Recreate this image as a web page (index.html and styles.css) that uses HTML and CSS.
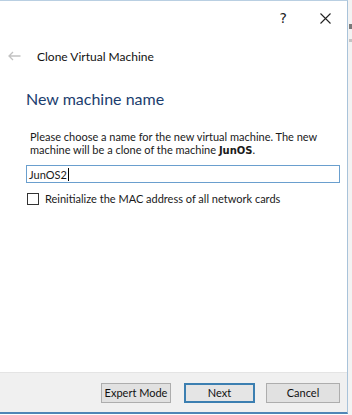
FILE: index.html
```html
<!DOCTYPE html>
<html>
<head>
<meta charset="utf-8">
<link rel="stylesheet" href="styles.css">
</head>
<body>
<div class="screen">
  <div class="dialog">
    <div class="titlebar">
      <span class="tb-help">?</span>
      <span class="tb-close">
        <svg width="11" height="11" viewBox="0 0 11 11"><path d="M0.5 0.5L10.5 10.5M10.5 0.5L0.5 10.5" stroke="#222" stroke-width="1.1" fill="none"/></svg>
      </span>
    </div>
    <div class="navrow">
      <svg class="back" width="13" height="10" viewBox="0 0 13 10"><path d="M5 1L1 5L5 9M1 5H12.5" stroke="#c2c2c2" stroke-width="1.3" fill="none"/></svg>
      <span class="navtitle">Clone Virtual Machine</span>
    </div>
    <div class="content">
      <h1 class="heading">New machine name</h1>
      <div class="desc">
        <div>Please choose a name for the new virtual machine. The new</div>
        <div>machine will be a clone of the machine <b class="mono">JunOS</b>.</div>
      </div>
      <div class="input"><span>JunOS2</span><span class="caret"></span></div>
      <label class="check"><span class="box"></span><span>Reinitialize the MAC address of all network cards</span></label>
    </div>
    <div class="footer">
      <button class="btn expert">Expert Mode</button>
      <button class="btn primary">Next</button>
      <button class="btn cancel">Cancel</button>
    </div>
  </div>
  <div class="side"><span class="tick t1"></span><span class="tick t2"></span></div>
</div>
</body>
</html>
```
FILE: styles.css
```css
html, body { margin: 0; padding: 0; background: #fff; }
body { width: 352px; height: 415px; overflow: hidden; font-family: "Lato", "Noto Sans", sans-serif; color: #1a1a1a; }
.screen { display: flex; width: 352px; height: 415px; }
.dialog { width: 348px; height: 414px; border-right: 1px solid #a9c3da; border-bottom: 2px solid #4f86b6; border-top: 1px solid #b9cfe2; box-sizing: border-box; display: flex; flex-direction: column; background: #fff; flex: none; }
.side { flex: 1; background: #f3f3f3; display: flex; flex-direction: column; }
.tick { display: block; height: 6px; background: #8a8a8a; margin-left: 1px; }
.t1 { margin-top: 24px; height: 5px; background: #7a7a7a; }
.t2 { margin-top: 10px; height: 3px; background: #c4c4c4; }
.titlebar { height: 32px; display: flex; align-items: center; justify-content: flex-end; padding-right: 16px; gap: 33px; flex: none; }
.tb-help { font-size: 14px; color: #222; font-family: "DejaVu Sans", sans-serif; margin-top: 2px; }
.tb-close { display: flex; margin-top: 2px; }
.navrow { height: 46px; display: flex; align-items: center; padding-left: 8px; flex: none; }
.back { margin-right: 16px; }
.navtitle { font-size: 12px; color: #111; margin-top: 1px; }
.content { flex: 1; padding-left: 26px; padding-right: 7px; }
.heading { margin: 10px 0 0 0; font-weight: normal; font-size: 16px; line-height: 20px; color: #1b3d6e; }
.desc { margin: 21px 0 0 4px; font-size: 11px; line-height: 13px; color: #1a1a1a; white-space: nowrap; }
.mono { font-family: "DejaVu Sans", sans-serif; font-size: 10px; }
.input { margin-top: 8px; height: 18px; border: 1px solid #6a9fce; box-sizing: border-box; display: flex; align-items: center; padding-left: 2px; font-size: 11px; }
.caret { width: 1px; height: 13px; background: #000; margin-left: 1px; }
.check { display: flex; align-items: center; margin-top: 9px; margin-left: 1px; font-size: 11px; height: 13px; }
.box { width: 12px; height: 12px; border: 1px solid #333; box-sizing: border-box; margin-right: 6px; }
.footer { height: 40px; background: #f0f0f0; border-top: 1px solid #e4e4e4; box-sizing: border-box; display: flex; align-items: center; justify-content: flex-end; padding-right: 7px; flex: none; }
.btn { height: 20px; background: #e1e1e1; border: 1px solid #adadad; font-family: inherit; font-size: 11px; color: #111; padding: 0; white-space: nowrap; }
.expert { width: 70px; margin-right: 13px; }
.primary { width: 71px; border: 2px solid #3c7fb1; background: #e5e5e5; margin-right: 11px; }
.cancel { width: 74px; }
```
